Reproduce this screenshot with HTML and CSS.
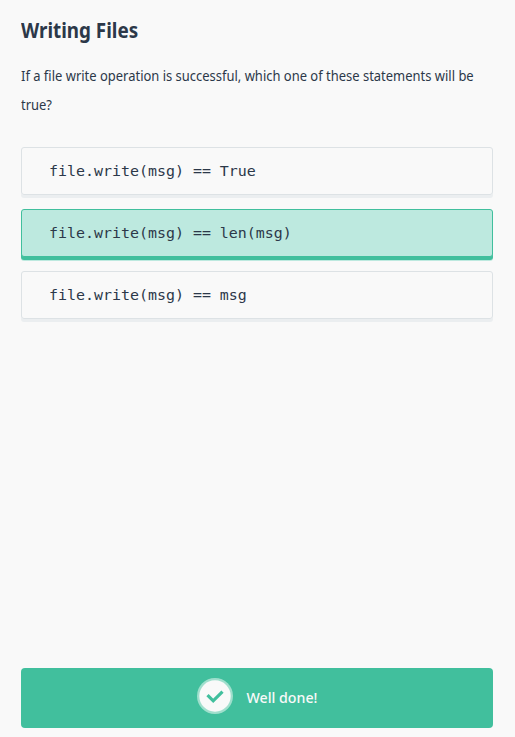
FILE: index.html
```html
<!DOCTYPE html>
<html lang="en">
<head>
<meta charset="utf-8">
<title>Writing Files</title>
<link rel="stylesheet" href="styles.css">
</head>
<body>
<main class="quiz">
  <h1 class="title"><span class="narrow-title">Writing Files</span></h1>
  <p class="question"><span class="narrow">If a file write operation is successful, which one of these statements will be<br>true?</span></p>
  <div class="answers">
    <div class="answer">file.write(msg) == True</div>
    <div class="answer selected">file.write(msg) == len(msg)</div>
    <div class="answer">file.write(msg) == msg</div>
  </div>
  <footer class="result">
    <svg class="check" width="36" height="36" viewBox="0 0 36 36">
      <circle cx="18" cy="18" r="18" fill="#a0dfcd"/>
      <circle cx="18" cy="18" r="15.7" fill="#f9f9f9"/>
      <path d="M10.5 17.2l5.7 5.6 9.3-9.2" fill="none" stroke="#41bf9d" stroke-width="3.2"/>
    </svg>
    <span class="message">Well done!</span>
  </footer>
</main>
</body>
</html>
```

FILE: styles.css
```css
* { box-sizing: border-box; }
body { margin: 0; background: #f9f9f9; color: #2c3849; font-family: "Noto Sans", sans-serif; }
.quiz { display: flex; flex-direction: column; height: 737px; padding: 15px 22px 9px 21px; }
.title { margin: 0; height: 30px; font-size: 21px; line-height: 30px; font-weight: 700; white-space: nowrap; }
.narrow-title { display: inline-block; transform: scaleX(.896); transform-origin: left; }
.question { margin: 16px 0 0; height: 58px; font-size: 14px; line-height: 29px; white-space: nowrap; }
.narrow { display: inline-block; transform: scaleX(.926); transform-origin: left; }
.answers { display: flex; flex-direction: column; gap: 14px; margin-top: 28px; }
.answer {
  height: 48px;
  padding-left: 27px;
  border: 1px solid #dde2e5;
  border-radius: 3px;
  box-shadow: 0 3px 0 #ebeef0;
  font-family: "DejaVu Sans Mono", monospace;
  font-size: 14.95px;
  line-height: 46px;
  white-space: pre;
}
.selected { background: #bde9df; border-color: #41bf9d; box-shadow: 0 3px 0 #41bf9d, 0 4px 0 #bde9df; }
.result {
  display: flex;
  justify-content: center;
  align-items: center;
  gap: 14px;
  height: 60px;
  margin-top: auto;
  border-radius: 4px;
  background: #41bf9d;
  color: #f9f9f9;
}
.check { position: relative; top: -2px; }
.message { font-size: 14.2px; font-weight: 500; line-height: 20px; white-space: nowrap; }
```
